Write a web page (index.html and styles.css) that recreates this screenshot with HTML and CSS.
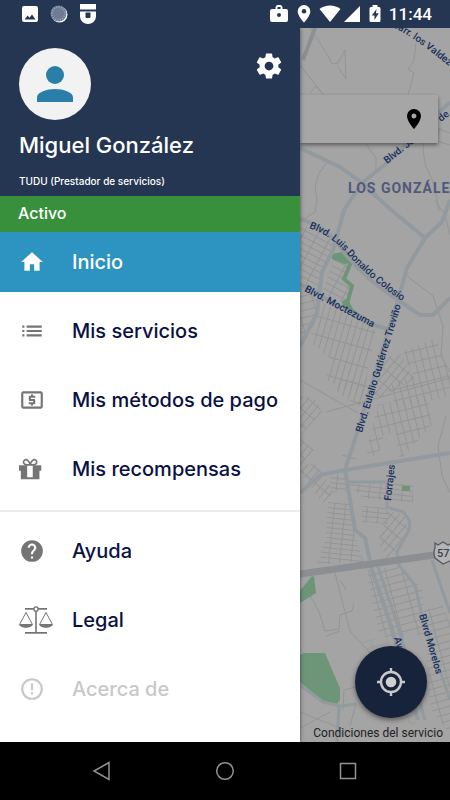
FILE: index.html
```html
<!DOCTYPE html>
<html lang="es">
<head>
<meta charset="utf-8">
<meta name="viewport" content="width=device-width, initial-scale=1">
<title>TUDU</title>
<link rel="stylesheet" href="styles.css">
</head>
<body>
<header class="status">
  <div class="status-left">
    <svg width="18" height="18" viewBox="0 0 18 18"><path fill="#fff" fill-rule="evenodd" d="M3 1h12a2 2 0 0 1 2 2v12a2 2 0 0 1-2 2H3a2 2 0 0 1-2-2V3a2 2 0 0 1 2-2zM3.500 14.500h11l-3.500-5-2.500 3.300-1.800-2.200z"/></svg>
    <svg width="18" height="18" viewBox="0 0 18 18"><circle cx="9.500" cy="9.500" r="8" fill="#fff"/><circle cx="8.500" cy="8.500" r="8" fill="#6f7c93"/><circle cx="8.500" cy="8.500" r="6.500" fill="none" stroke="#9aa5b6" stroke-width="2" stroke-dasharray="1 1.500"/></svg>
    <svg width="18" height="20" viewBox="0 0 18 20"><path fill="#fff" d="M1 0h16v5.500H1zM1 7.500h5.500V13q0 1 1 1h3q1 0 1-1V7.500H17V12c0 10.500-16 10.500-16 0z"/><path fill="#fff" d="M6 7.500h6v1H6z"/></svg>
  </div>
  <div class="status-right">
    <svg width="20" height="18" viewBox="0 0 20 18"><path fill="#fff" fill-rule="evenodd" d="M6.500 4V2l1.500-2h4l1.500 2v2H17a2 2 0 0 1 2 2v9a2 2 0 0 1-2 2H3a2 2 0 0 1-2-2V6a2 2 0 0 1 2-2zM8.500 4h3V2h-3zM10 8a2 2 0 1 0 0 4 2 2 0 0 0 0-4z"/></svg>
    <svg width="14" height="18" viewBox="0 0 14 18"><path fill="#fff" fill-rule="evenodd" d="M7 0a6.300 6.300 0 0 1 6.300 6.500C13.300 11 7 17.500 7 17.500S.7 11 .7 6.500A6.300 6.300 0 0 1 7 0zm0 4a2.300 2.300 0 1 0 0 4.600A2.300 2.300 0 0 0 7 4z"/></svg>
    <svg width="22" height="18" viewBox="0 0 22 18"><path fill="#fff" d="M.5 4C6-.7 16-.7 21.500 4L11 17z"/></svg>
    <svg width="18" height="18" viewBox="0 0 18 18"><path fill="#fff" d="M17 1v16H1z"/></svg>
    <svg width="12" height="18" viewBox="0 0 12 18"><path fill="#fff" d="M3.500 0h5v2H10q1.500 0 1.500 1.500v12Q11.500 17 10 17H2Q.5 17 .5 15.500v-12Q.5 2 2 2h1.500z"/><path fill="#253653" d="M7.500 4 2.800 10.500h2.700V15l4.200-6.700H7z"/></svg>
    <time class="clock">11:44</time>
  </div>
</header>

<main class="screen">
  <aside class="drawer">
    <section class="profile">
      <div class="profile-top">
        <span class="avatar"><svg width="48" height="48" viewBox="0 0 48 48"><circle cx="24" cy="15" r="9" fill="#2a7fa8"/><path fill="#2a7fa8" d="M6 42v-4.500C6 32 16 29 24 29s18 3 18 8.500V42z"/></svg></span>
        <button class="settings" type="button" aria-label="Ajustes"><svg width="30" height="30" viewBox="0 0 24 24"><path fill="#fff" d="M19.430 12.980c.04-.32.07-.64.07-.98s-.03-.66-.07-.98l2.110-1.650c.19-.15.24-.42.12-.64l-2-3.460c-.12-.22-.39-.3-.61-.22l-2.490 1c-.52-.4-1.080-.73-1.690-.98l-.38-2.650C14.460 2.180 14.250 2 14 2h-4c-.25 0-.46.18-.49.42l-.38 2.650c-.61.25-1.170.59-1.690.98l-2.490-1c-.23-.09-.49 0-.61.22l-2 3.460c-.13.22-.07.49.12.64l2.110 1.650c-.04.32-.07.65-.07.98s.03.66.07.98l-2.110 1.650c-.19.15-.24.42-.12.64l2 3.460c.12.22.39.3.61.22l2.490-1c.52.4 1.080.73 1.690.98l.38 2.650c.03.24.24.42.49.42h4c.25 0 .46-.18.49-.42l.38-2.650c.61-.25 1.170-.59 1.690-.98l2.490 1c.23.09.49 0 .61-.22l2-3.460c.12-.22.07-.49-.12-.64zM12 15.500a3.500 3.500 0 1 1 0-7 3.500 3.500 0 0 1 0 7z"/></svg></button>
      </div>
      <h1 class="name">Miguel González</h1>
      <p class="role">TUDU (Prestador de servicios)</p>
    </section>
    <p class="state">Activo</p>
    <nav class="menu">
      <a class="item active" href="#inicio"><svg class="icon" viewBox="0 0 24 24"><path d="M10 20v-6h4v6h5v-8h3L12 3 2 12h3v8z"/></svg><span>Inicio</span></a>
      <a class="item" href="#servicios"><svg class="icon" viewBox="0 0 24 24"><path d="M3 13h2v-2H3zm0 4h2v-2H3zm0-8h2V7H3zm4 4h14v-2H7zm0 4h14v-2H7zM7 7v2h14V7z"/></svg><span>Mis servicios</span></a>
      <a class="item" href="#pagos"><svg class="icon" viewBox="0 0 24 24"><path d="M11 17h2v-1h1c.55 0 1-.45 1-1v-3c0-.55-.45-1-1-1h-3v-1h4V8h-2V7h-2v1h-1c-.55 0-1 .45-1 1v3c0 .55.45 1 1 1h3v1H9v2h2zm9-13H4c-1.110 0-2 .89-2 2v12c0 1.110.89 2 2 2h16c1.110 0 2-.89 2-2V6c0-1.110-.89-2-2-2zm0 14H4V6h16z"/></svg><span>Mis métodos de pago</span></a>
      <a class="item" href="#recompensas"><svg class="icon" viewBox="2 0 28 28"><path fill-rule="evenodd" d="M2 10h24v6h-2v9H4v-9H2zm8.800 0v13h6V10z"/><path fill="none" stroke="#757575" stroke-width="1.800" d="M14 9.500C13 5 10 3 8 4.500S6.500 9 10 9.500zM14 9.500C15 5 18 3 20 4.500S21.500 9 18 9.500z"/></svg><span>Mis recompensas</span></a>
      <hr class="divider">
      <a class="item" href="#ayuda"><svg class="icon" viewBox="0 0 24 24"><path d="M12 2a10 10 0 1 0 0 20 10 10 0 0 0 0-20zm1 17h-2v-2h2zm2.070-7.750-.9.920C13.450 12.900 13 13.500 13 15h-2v-.5c0-1.100.45-2.100 1.170-2.830l1.240-1.260c.37-.36.59-.86.59-1.410a2 2 0 1 0-4 0H8a4 4 0 1 1 8 0c0 .88-.36 1.680-.93 2.250z"/></svg><span>Ayuda</span></a>
      <a class="item" href="#legal"><svg class="icon wide" viewBox="0 0 34 28"><path d="M6 2h9.500v1.700H6zM18.500 2H28v1.700h-9.500zM16.200 5h1.600v21H28v1.700H6V26h10.200zM0 18h14c-1 5-13 5-14 0zM20 18h14c-1 5-13 5-14 0z"/><g fill="none" stroke="#757575"><circle cx="17" cy="3" r="2.200" stroke-width="1.300"/><path d="M.8 18 7 6.500 13.200 18M20.800 18 27 6.500 33.200 18"/></g></svg><span>Legal</span></a>
      <a class="item faded" href="#acerca"><svg class="icon" viewBox="0 0 24 24"><path d="M11 15h2v2h-2zm0-8h2v6h-2zm1-5a10 10 0 1 0 0 20 10 10 0 0 0 0-20zm0 18a8 8 0 1 1 0-16 8 8 0 0 1 0 16z"/></svg><span>Acerca de</span></a>
    </nav>
  </aside>

  <section class="map" aria-label="Mapa">
    <svg class="map-art" viewBox="300 28 150 714" preserveAspectRatio="xMinYMin slice">
      <defs>
        <pattern id="g1" width="13" height="6" patternUnits="userSpaceOnUse" patternTransform="rotate(28)"><path class="line" d="M0 0H13M0 0V6"/></pattern>
        <pattern id="g2" width="6" height="18" patternUnits="userSpaceOnUse" patternTransform="rotate(16)"><path class="line" d="M0 0H6M0 0V18"/></pattern>
        <pattern id="g3" width="7" height="11" patternUnits="userSpaceOnUse" patternTransform="rotate(-14)"><path class="line" d="M0 0H7M0 0V11"/></pattern>
        <pattern id="g4" width="12" height="6" patternUnits="userSpaceOnUse" patternTransform="rotate(-50)"><path class="line" d="M0 0H12M0 0V6"/></pattern>
        <pattern id="g5" width="11" height="5" patternUnits="userSpaceOnUse" patternTransform="rotate(6)"><path class="line" d="M0 0H11M0 0V5"/></pattern>
        <pattern id="g6" width="16" height="7" patternUnits="userSpaceOnUse" patternTransform="rotate(-15)"><path class="line" d="M0 0H16M0 0V7"/></pattern>
        <path id="colosio" d="M309 228Q332 236 347 254Q370 280 408 305"/>
        <path id="valdez" d="M392 27Q412 35 456 72"/>
      </defs>
      <rect x="300" y="28" width="150" height="714" fill="#a4a4a4"/>
      <g>
        <path fill="url(#g1)" d="M300 224l35 14-12 34-6 22-17-10z"/>
        <path fill="url(#g1)" d="M334 258l17 4-6 18 6 8-5 16-24-11z"/>
        <path fill="url(#g6)" d="M300 288l18 8-2 20-12 24-4-10z"/>
        <path fill="url(#g2)" d="M318 300l58 30-13 66-37-16 4-22-20-16z"/>
        <path fill="url(#g4)" d="M383 358l18-4 14 26-35 18-9-6z"/>
        <path fill="url(#g3)" d="M402 352l34-14 14 38v20l-54 12-9-21 26-12z"/>
        <path fill="url(#g3)" d="M378 405l50-10 4 30-32 35-5-28-12 3-5 22-12-4z"/>
        <path fill="url(#g2)" d="M335 380l35-2-8 30-28-18z"/>
        <path fill="url(#g4)" d="M300 396l16 4 6 12-22 24zM300 438l14 12-14 16zM300 462l16 3 18 26-10 14-24-34z"/>
        <path fill="url(#g5)" d="M330 474l14 1 3 18-16-1zM347 484h66v18l-27-1-20-2z"/>
        <path fill="url(#g5)" d="M328 502l22 1 5 35 9 24-47 2 9-26z"/>
        <path fill="url(#g5)" d="M362 506l26 2v16l-26-2z"/>
        <path fill="url(#g4)" d="M387 510l19 6 2 18-20 26-10-16z"/>
        <path fill="url(#g6)" d="M366 570l32-4 24 22 3 46-28 4-18-2z"/>
        <path fill="url(#g6)" d="M424 610l18-6 8 20v110l-20-26z"/>
        <path fill="url(#g6)" d="M362 640l26-2 30 90-44-20z" opacity=".5"/>
      </g>
      <g class="minor">
        <path d="M310 28q14 20 22 36l6-1 7-13 1 29-9-14M300 65l33 42M310 93l6-7 6 7M416 43l-2 18-6 8 6 4-6 22M423 143q0 20 6 30t10 38M366 144l10 14v12M327 163l-8 10-4 13 2 14-2 12-14 9M435 200l10 15 5 20M407 276l26 20 10 30-2 30 9 16M300 380l58 33M326 412l124-34M446 416l-8 30 4 30 8 17M342 455l14 4M436 128l14 5M440 128l-4 13 14 4M335 573l15 58 24 26M310 596q10 14 15 35l14-2 1-14 12-4 2-8M326 636l14-5M340 580l6 10M300 712l50 20M344 690l30-8M344 690l-1 20M356 704l-6 22M300 728l30-16"/>
      </g>
      <path d="M303 60l12-32" stroke="#8d9093" stroke-width="4"/>
      <g fill="#6d9678">
        <path d="M332 254l15-3 6 9-2 3-7 1-12-5z"/>
        <path d="M351 262l-7 17 8 7-5 18" fill="none" stroke="#6d9678" stroke-width="4"/>
        <path d="M342 301l6-2 5 10 8 6-8-1-10-8z"/>
        <path d="M402 486h8v5h-8zM300 603v-12l11-14 3-1 2 17zM300 655l4-2h21l8 19 7 16v12l-3 4-14-3-23-19z"/>
      </g>
      <g class="major">
        <path d="M300 148l40 19 22 16 28 26 35 29"/>
        <path d="M450 102l-63 61-25 20-18 27-11 40-11 22-5 41-17 34"/>
        <path d="M450 200l-8 22-17 16-18 30-9 32-25 80-15 50-13 40"/>
        <path d="M300 219q28 8 45 35 24 28 53 46l22 15h13l17-17"/>
        <path d="M300 284l70 40 18 5"/>
        <path d="M300 493l20-18 25-5 105-17"/>
        <path d="M345 470l10 60 10 8 7 32 18 53 28 97"/>
        <path class="slim" d="M378 567l19 56 28 97M345 482h42v25l16 5q9 8 6 18l-12 22 1 12 17 21 8 35 27 80M432 560l18 53"/>
        <path class="slim" d="M300 685l23 17 17 4 17-2M339 706l-2 36"/>
      </g>
      <path d="M300 574l134-19 16-2" stroke="#8b8f92" stroke-width="7"/>
      <g class="street">
        <text><textPath href="#valdez">Carr. los Valdez</textPath></text>
        <text transform="translate(387 164) rotate(-38)">Blvd. José de</text>
        <text transform="translate(441 122) rotate(-38)">de</text>
        <text><textPath href="#colosio">Blvd. Luis Donaldo Colosio</textPath></text>
        <text transform="translate(304 291) rotate(28)">Blvd. Moctezuma</text>
        <text transform="translate(362 433) rotate(-73)">Blvd. Eulalio Gutiérrez Treviño</text>
        <text transform="translate(391 501) rotate(-84)">Forrajes</text>
        <text transform="translate(394 638) rotate(75)">Av.</text>
        <text transform="translate(419 615) rotate(74)">Blvrd Morelos</text>
      </g>
      <text class="district" x="348" y="193">LOS GONZÁLEZ</text>
      <path d="M435 543l3 2 5-3 5 3 4-2v17l-9 4-8-6q-2-6 0-10z" fill="#b4b4b4" stroke="#555866" stroke-width="1.300"/>
      <text class="shield" x="437" y="557">57</text>
    </svg>
    <form class="search">
      <input class="search-box" type="text" aria-label="Dirección">
      <svg width="24" height="24" viewBox="0 0 24 24"><path d="M12 2a7 7 0 0 0-7 7c0 5.250 7 13 7 13s7-7.750 7-13a7 7 0 0 0-7-7zm0 9.500a2.500 2.500 0 1 1 0-5 2.500 2.500 0 0 1 0 5z"/></svg>
    </form>
    <div class="map-foot">
      <button class="locate" type="button" aria-label="Mi ubicación"><svg width="30" height="30" viewBox="0 0 30 30"><g fill="none" stroke="#c9c9c9" stroke-width="2.400"><circle cx="15" cy="15" r="10"/><path d="M15 1v5M15 24v5M1 15h5M24 15h5"/></g><circle cx="15" cy="15" r="5.300" fill="#d0d0d0"/></svg></button>
      <a class="terms" href="#condiciones">Condiciones del servicio</a>
    </div>
  </section>
</main>

<footer class="softkeys">
  <button type="button" aria-label="Atrás"><svg width="20" height="20" viewBox="0 0 20 20"><path d="M17 1.500v17L2 10z"/></svg></button>
  <button type="button" aria-label="Pantalla principal"><svg width="20" height="20" viewBox="0 0 20 20"><circle cx="10" cy="10" r="8.300"/></svg></button>
  <button type="button" aria-label="Recientes"><svg width="20" height="20" viewBox="0 0 20 20"><rect x="2.500" y="2.500" width="15" height="15"/></svg></button>
</footer>
</body>
</html>
```
FILE: styles.css
```css
* { box-sizing: border-box; }

body {
  margin: 0;
  min-height: 100vh;
  display: flex;
  flex-direction: column;
  font-family: Inter, "Open Sans", sans-serif;
  font-weight: 500;
  background: #000;
}

h1, p { margin: 0; font-weight: 500; }
svg { display: block; flex: none; }
a { color: inherit; text-decoration: none; }
button { padding: 0; border: 0; background: none; cursor: pointer; }

.status {
  position: relative;
  z-index: 2;
  display: flex;
  justify-content: space-between;
  height: 28px;
  padding: 0 18px 0 21px;
  background: #253653;
  color: #fff;
}
.status-left, .status-right { display: flex; align-items: center; }
.status-left { gap: 11px; }
.status-right { gap: 8px; }
.status-right svg:nth-child(4) { margin-left: -6px; }
.clock { font: 500 17px/28px Roboto, sans-serif; }

.screen { flex: 1; display: grid; grid-template-columns: 2fr 1fr; }

.drawer {
  position: relative;
  z-index: 1;
  background: #fff;
  box-shadow: 0 0 4px rgba(0, 0, 0, .6);
}
.profile { height: 168px; padding: 20px 16px 0 19px; background: #253653; color: #fff; }
.profile-top { display: flex; justify-content: space-between; }
.avatar {
  display: grid;
  place-items: center;
  width: 72px;
  height: 72px;
  border-radius: 50%;
  background: #f2f2f2;
}
.settings { width: 30px; height: 36px; }
.name { margin-top: 11px; font-size: 22px; line-height: 28px; }
.role { margin-top: 15px; font-size: 10px; line-height: 14px; }
.state {
  padding: 0 18px 2px;
  background: #388f3c;
  color: #fff;
  font-size: 16px;
  line-height: 34px;
}

.menu { display: flex; flex-direction: column; gap: 9px; padding-bottom: 23px; }
.item {
  display: grid;
  grid-template-columns: 53px 1fr;
  align-items: center;
  height: 60px;
  padding: 0 8px 0 19px;
  color: #0a1145;
  font-size: 20px;
  line-height: 24px;
  white-space: nowrap;
}
.icon { width: 26px; height: 28px; fill: #757575; }
.icon.wide { width: 34px; }
.active { background: #2d93c0; color: #fff; }
.active .icon { fill: #fff; }
.faded { color: #c8c8c8; }
.faded .icon { fill: #c8c8c8; }
.divider { width: 100%; height: 2px; margin: 2px 0 0; border: 0; background: #ececec; }

.map { position: relative; overflow: hidden; background: #a4a4a4; }
.map-art { position: absolute; inset: 0; width: 100%; height: 100%; font-family: Roboto, sans-serif; }
.line { fill: none; stroke: #949494; stroke-width: 2; }
.minor { fill: none; stroke: #949494; stroke-width: 1; }
.major { fill: none; stroke: #929a9f; stroke-width: 4; stroke-linejoin: round; }
.slim { stroke-width: 3; }
.street { font-size: 10px; font-weight: 500; fill: #17305d; }
.district { font-size: 14px; font-weight: 700; letter-spacing: 1px; fill: #50597a; }
.shield { font-size: 11px; font-weight: 500; fill: #3c4052; }

.search {
  position: absolute;
  top: 67px;
  left: 0;
  right: 12px;
  display: flex;
  align-items: center;
  height: 48px;
  padding-right: 12px;
  background: #a6a6a6;
  box-shadow: 0 2px 4px rgba(0, 0, 0, .45);
}
.search-box { flex: 1; min-width: 0; height: 100%; border: 0; background: none; }

.map-foot {
  position: absolute;
  right: 7px;
  bottom: 0;
  display: flex;
  flex-direction: column;
  align-items: flex-end;
  gap: 6px;
}
.locate {
  display: grid;
  place-items: center;
  width: 72px;
  height: 72px;
  margin-right: 16px;
  border-radius: 50%;
  background: #17233a;
  box-shadow: 0 2px 5px rgba(0, 0, 0, .5);
}
.terms { font: 400 12px/18px Roboto, sans-serif; color: #222; white-space: nowrap; }

.softkeys {
  display: grid;
  grid-template-columns: repeat(3, 1fr);
  height: 58px;
  padding: 0 40px;
  background: #000;
}
.softkeys button { display: grid; place-items: center; }
.softkeys svg { fill: none; stroke: #929292; stroke-width: 1.500; }
```
